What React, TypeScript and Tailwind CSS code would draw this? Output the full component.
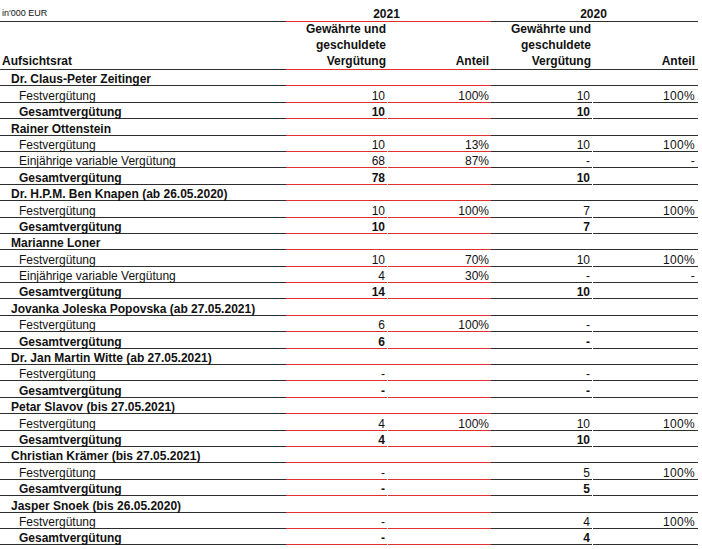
type Line = { label: string; v21: string; a21: string; v20: string; a20: string; total?: boolean };
type Member = { name: string; lines: Line[] };

const members: Member[] = [
  {
    name: "Dr. Claus-Peter Zeitinger",
    lines: [
      { label: "Festvergütung", v21: "10", a21: "100%", v20: "10", a20: "100%" },
      { label: "Gesamtvergütung", v21: "10", a21: "", v20: "10", a20: "", total: true },
    ],
  },
  {
    name: "Rainer Ottenstein",
    lines: [
      { label: "Festvergütung", v21: "10", a21: "13%", v20: "10", a20: "100%" },
      { label: "Einjährige variable Vergütung", v21: "68", a21: "87%", v20: "-", a20: "-" },
      { label: "Gesamtvergütung", v21: "78", a21: "", v20: "10", a20: "", total: true },
    ],
  },
  {
    name: "Dr. H.P.M. Ben Knapen (ab 26.05.2020)",
    lines: [
      { label: "Festvergütung", v21: "10", a21: "100%", v20: "7", a20: "100%" },
      { label: "Gesamtvergütung", v21: "10", a21: "", v20: "7", a20: "", total: true },
    ],
  },
  {
    name: "Marianne Loner",
    lines: [
      { label: "Festvergütung", v21: "10", a21: "70%", v20: "10", a20: "100%" },
      { label: "Einjährige variable Vergütung", v21: "4", a21: "30%", v20: "-", a20: "-" },
      { label: "Gesamtvergütung", v21: "14", a21: "", v20: "10", a20: "", total: true },
    ],
  },
  {
    name: "Jovanka Joleska Popovska (ab 27.05.2021)",
    lines: [
      { label: "Festvergütung", v21: "6", a21: "100%", v20: "-", a20: "" },
      { label: "Gesamtvergütung", v21: "6", a21: "", v20: "-", a20: "", total: true },
    ],
  },
  {
    name: "Dr. Jan Martin Witte (ab 27.05.2021)",
    lines: [
      { label: "Festvergütung", v21: "-", a21: "", v20: "-", a20: "" },
      { label: "Gesamtvergütung", v21: "-", a21: "", v20: "-", a20: "", total: true },
    ],
  },
  {
    name: "Petar Slavov (bis 27.05.2021)",
    lines: [
      { label: "Festvergütung", v21: "4", a21: "100%", v20: "10", a20: "100%" },
      { label: "Gesamtvergütung", v21: "4", a21: "", v20: "10", a20: "", total: true },
    ],
  },
  {
    name: "Christian Krämer (bis 27.05.2021)",
    lines: [
      { label: "Festvergütung", v21: "-", a21: "", v20: "5", a20: "100%" },
      { label: "Gesamtvergütung", v21: "-", a21: "", v20: "5", a20: "", total: true },
    ],
  },
  {
    name: "Jasper Snoek (bis 26.05.2020)",
    lines: [
      { label: "Festvergütung", v21: "-", a21: "", v20: "4", a20: "100%" },
      { label: "Gesamtvergütung", v21: "-", a21: "", v20: "4", a20: "", total: true },
    ],
  },
];

const dark = "border-[#2e2e2e]";
const red = "border-[#e02f2f]";

const Cell = ({ w, tone, children, gap }: { w: string; tone: string; children?: React.ReactNode; gap?: boolean }) => (
  <div className={`${w} flex items-end justify-end border-b ${tone} pr-[2px] ${gap ? "mr-px" : ""}`}>
    {children}
  </div>
);

const App = () => {
  return (
    <div className="w-[702px] h-[549px] bg-white text-[#111] text-[12px] leading-[12px] overflow-hidden" style={{ fontFamily: '"Liberation Sans", Arial, sans-serif' }}>
      <div className="w-[698px]">
        {/* top header */}
        <div className="flex h-[22px]">
          <div className={`w-[286px] flex items-end border-b ${dark} pl-[2px] pb-[3px] text-[9px] leading-[9px]`}>in'000 EUR</div>
          <div className={`w-[205px] flex items-end justify-center border-b ${red} font-bold pb-[1px] pr-[4px]`}>2021</div>
          <div className={`w-[207px] flex items-end justify-center border-b ${dark} font-bold pb-[1px] pr-[2px]`}>2020</div>
        </div>
        <div className="flex h-[48px] font-bold leading-[16px]">
          <div className={`w-[286px] flex items-end border-b ${dark} pl-[2px]`}>Aufsichtsrat</div>
          <div className={`w-[102px] flex items-end justify-end text-right border-b ${red} pr-[2px]`}>
            Gewährte und<br />geschuldete<br />Vergütung
          </div>
          <div className={`w-[103px] flex items-end justify-end border-b ${red} pr-[2px]`}>Anteil</div>
          <div className={`w-[102px] flex items-end justify-end text-right border-b ${dark} pr-[2px]`}>
            Gewährte und<br />geschuldete<br />Vergütung
          </div>
          <div className={`w-[105px] flex items-end justify-end border-b ${dark} pr-[3px]`}>Anteil</div>
        </div>

        {members.map((m) => (
          <div key={m.name}>
            <div className="flex h-[16.4px] font-bold">
              <div className={`w-[286px] flex items-end border-b ${dark} pl-[11px]`}>{m.name}</div>
              <div className={`w-[205px] border-b ${red}`} />
              <div className={`w-[207px] border-b ${dark}`} />
            </div>
            {m.lines.map((l) => (
              <div key={l.label} className={`flex h-[16.4px] ${l.total ? "font-bold" : ""}`}>
                <div className={`w-[286px] flex items-end border-b ${dark} pl-[19px]`}>{l.label}</div>
                <Cell w="w-[101px]" tone={red} gap>{l.v21}</Cell>
                <Cell w="w-[103px]" tone={red}>{l.a21}</Cell>
                <Cell w="w-[101px]" tone={dark} gap>{l.v20}</Cell>
                <div className={`w-[105px] flex items-end justify-end border-b ${dark} pr-[3px] tracking-[0.3px]`}>{l.a20}</div>
              </div>
            ))}
          </div>
        ))}
      </div>
    </div>
  );
};

export default App;
